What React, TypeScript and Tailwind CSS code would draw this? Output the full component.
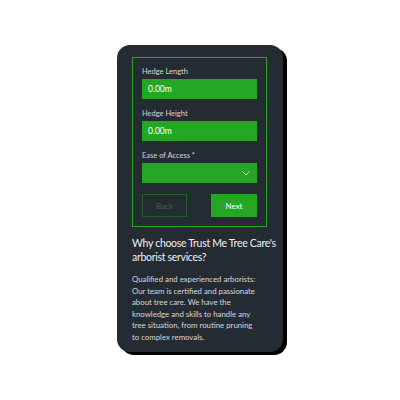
import React from "react";

const FIELDS = [
    { label: "Hedge Length", value: "0.00m" },
    { label: "Hedge Height", value: "0.00m" },
];

const HEADING = ["Why choose Trust Me Tree Care's", "arborist services?"];

const BODY = [
    "Qualified and experienced arborists:",
    "Our team is certified and passionate",
    "about tree care. We have the",
    "knowledge and skills to handle any",
    "tree situation, from routine pruning",
    "to complex removals.",
];

function Field({ label, value }: { label: string; value: string }) {
    return (
        <div className="flex flex-col">
            <span className="h-[12px] text-[7.5px] leading-[12px] text-[#d4d6d8]">{label}</span>
            <div className="mt-[1px] flex h-[20px] items-center bg-[#25a725] pl-[6px] text-[8.5px] text-white">
                {value}
            </div>
        </div>
    );
}

export default function App() {
    return (
        <div
            className="flex min-h-[400px] justify-center bg-white pt-[45px]"
            style={{ fontFamily: "Lato, 'Noto Sans', sans-serif" }}
        >
            <div className="h-[307px] w-[166px] rounded-[13px] bg-[#252b33] pl-[15px] pr-[16px] pt-[12px] shadow-[4px_3px_0_#000]">
                <div className="flex flex-col gap-[9px] border border-[#25a725] px-[9px] pb-[9px] pt-[8px]">
                    {FIELDS.map((f) => (
                        <Field key={f.label} label={f.label} value={f.value} />
                    ))}
                    <div className="flex flex-col">
                        <span className="h-[12px] text-[7.5px] leading-[12px] text-[#d4d6d8]">Ease of Access *</span>
                        <div className="mt-[1px] flex h-[20px] items-center justify-end bg-[#25a725] pr-[7px]">
                            <svg width="8" height="5" viewBox="0 0 8 5" fill="none">
                                <path d="M0.5 0.5 L4 4 L7.5 0.5" stroke="#d8f0d8" strokeWidth="0.8" />
                            </svg>
                        </div>
                    </div>
                    <div className="mt-[2px] flex justify-between">
                        <button className="h-[23px] w-[45px] border border-[#22622a] text-[8px] text-[#2f7534]">
                            Back
                        </button>
                        <button className="h-[23px] w-[46px] bg-[#25a725] text-[8px] text-white">Next</button>
                    </div>
                </div>
                <h2 className="mt-[9px] text-[10.5px] leading-[14px] tracking-[-0.3px] text-[#eef0f2]">
                    {HEADING.map((line) => (
                        <span key={line} className="block whitespace-nowrap">{line}</span>
                    ))}
                </h2>
                <p className="mt-[10px] text-[7.8px] leading-[11.6px] text-[#d6d8da]">
                    {BODY.map((line) => (
                        <span key={line} className="block whitespace-nowrap">{line}</span>
                    ))}
                </p>
            </div>
        </div>
    );
}
